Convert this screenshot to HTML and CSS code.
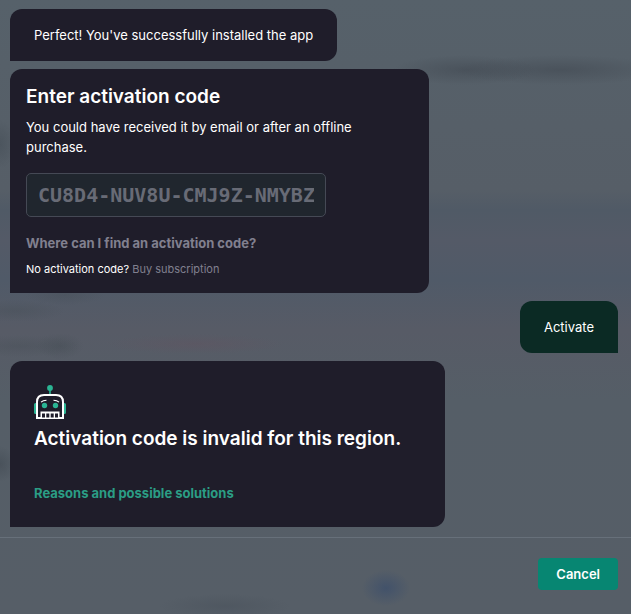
FILE: index.html
```html
<!DOCTYPE html>
<html lang="en">

<head>
    <meta charset="UTF-8">
    <meta name="viewport" content="width=device-width, initial-scale=1.0">
    <title>Activation</title>
    <link rel="stylesheet" href="styles.css">
</head>

<body>

    <main class="chat">
        <p class="bubble">Perfect! You've successfully installed the app</p>

        <!-- Activation code form -->
        <form class="bubble code-form" id="codeForm">
            <h2><label for="code">Enter activation code</label></h2>
            <p class="hint">You could have received it by email or after an offline purchase.</p>
            <input class="code-input" type="text" id="code" name="code" placeholder="CU8D4-NUV8U-CMJ9Z-NMYBZ">
            <a class="help-link" href="#">Where can I find an activation code?</a>
            <p class="small">No activation code? <a href="#">Buy subscription</a></p>
        </form>

        <button class="bubble reply" type="submit" form="codeForm">Activate</button>

        <!-- Error message -->
        <section class="bubble error">
            <svg class="robot" width="32" height="34" viewBox="0 0 32 34" fill="none" aria-hidden="true">
                <path d="M16 3v7" stroke="#2bb594" stroke-width="1.6" />
                <circle cx="16" cy="3" r="2.9" fill="#2bb594" />
                <path d="M3 18H1.5Q0 18 0 19.5v8Q0 29 1.5 29H3zM29 18h1.5q1.5 0 1.5 1.5v8q0 1.5-1.5 1.5H29z" fill="#2bb594" />
                <path d="M3 33V17Q3 10 10 10h12q7 0 7 7v16z" stroke="#fff" stroke-width="2" />
                <path d="M7 17.2Q9 15.5 12.5 15.3M19.5 15.3q3.5.2 5.5 1.9" stroke="#fff" stroke-width="1.1" />
                <circle cx="10.5" cy="20.5" r="2.7" fill="#2bb594" />
                <circle cx="21.5" cy="20.5" r="2.7" fill="#2bb594" />
                <path d="M6.5 34v-7.5h19V34z" fill="#fff" />
                <path d="M8 28.5h3v4H8zM12.300 28.5h3v4h-3zM16.700 28.5h3v4h-3zM21 28.5h3v4h-3z" fill="#1f1d2a" />
            </svg>
            <h2>Activation code is invalid for this region.</h2>
            <a class="solutions" href="#">Reasons and possible solutions</a>
        </section>
    </main>

    <footer class="footer">
        <button class="cancel" type="button">Cancel</button>
    </footer>

</body>

</html>
```

FILE: styles.css
```css
* {
    box-sizing: border-box;
}

/* Dimmed page behind the chat */
body {
    margin: 0;
    min-height: 100vh;
    display: flex;
    flex-direction: column;
    font-family: Inter, "Liberation Sans", sans-serif;
    font-size: 13px;
    line-height: 20px;
    color: #fff;
    background-color: #565e67;
    background-image:
        radial-gradient(ellipse 72px 15px at 465px 70px, rgba(62, 69, 78, 0.5), transparent),
        radial-gradient(ellipse 105px 15px at 560px 70px, rgba(62, 69, 78, 0.5), transparent),
        radial-gradient(ellipse 24px 18px at 386px 588px, rgba(53, 74, 108, 0.6), transparent),
        radial-gradient(ellipse 66px 12px at 225px 606px, rgba(66, 75, 85, 0.35), transparent),
        radial-gradient(ellipse 24px 13px at 60px 346px, rgba(66, 75, 82, 0.4), transparent),
        radial-gradient(ellipse 60px 11px at 20px 346px, rgba(70, 78, 86, 0.4), transparent),
        radial-gradient(ellipse 50px 11px at 15px 311px, rgba(70, 78, 86, 0.4), transparent),
        radial-gradient(ellipse 40px 10px at 65px 295px, rgba(70, 78, 86, 0.4), transparent),
        radial-gradient(ellipse 90px 10px at 195px 344px, rgba(98, 82, 95, 0.4), transparent),
        radial-gradient(ellipse 16px 24px at 0 144px, rgba(66, 75, 84, 0.5), transparent),
        radial-gradient(ellipse 16px 18px at 0 464px, rgba(62, 70, 79, 0.5), transparent),
        linear-gradient(#56616a, #565e67 190px, #505a66 210px, #545a67 240px, #505a68 280px, #575b66 330px, #555e67 400px, #565e67);
}

h2,
p {
    margin: 0;
}

h2 {
    font-size: 19px;
    line-height: 24px;
    font-weight: 600;
}

a {
    text-decoration: none;
}

button {
    border: none;
    color: #fff;
    font-family: inherit;
    font-size: 13px;
    line-height: 20px;
    cursor: pointer;
}

/* Messages */
.chat {
    flex: 1;
    display: flex;
    flex-direction: column;
    align-items: flex-start;
    gap: 8px;
    padding: 9px 13px 10px 10px;
}

.bubble {
    padding: 16px 24px;
    background-color: #1f1d2a;
    border-radius: 12px 12px 12px 0;
}

.reply {
    align-self: flex-end;
    background-color: #0b2a24;
    border-radius: 12px 12px 0 12px;
}

/* Activation code form */
.code-form {
    display: flex;
    flex-direction: column;
    align-items: flex-start;
    width: 100%;
    max-width: 419px;
    padding: 16px;
}

.hint {
    max-width: 350px;
    margin: 8px 0 16px;
}

.code-input {
    width: 300px;
    max-width: 100%;
    height: 44px;
    padding: 0 11px;
    border: 1px solid #454955;
    border-radius: 5px;
    background-color: #20262e;
    color: #fff;
    font-family: "DejaVu Sans Mono", monospace;
    font-size: 20px;
    font-weight: bold;
}

.code-input::placeholder {
    color: #686b76;
    opacity: 1;
}

.help-link {
    margin: 16px 0 8px;
    color: #81808f;
    font-weight: bold;
}

.small {
    font-size: 11px;
    line-height: 16px;
}

.small a {
    color: #81808f;
}

/* Error message */
.error {
    display: flex;
    flex-direction: column;
    align-items: flex-start;
    width: 100%;
    max-width: 435px;
    padding: 24px;
}

.error h2 {
    margin: 8px 0 32px;
}

.solutions {
    color: #2b9d85;
    font-weight: bold;
}

/* Bottom bar */
.footer {
    display: flex;
    justify-content: flex-end;
    padding: 20px 13px 24px;
    border-top: 1px solid #67707a;
}

.cancel {
    padding: 6px 18px;
    background-color: #078672;
    border-radius: 4px;
    font-weight: 600;
}
```
